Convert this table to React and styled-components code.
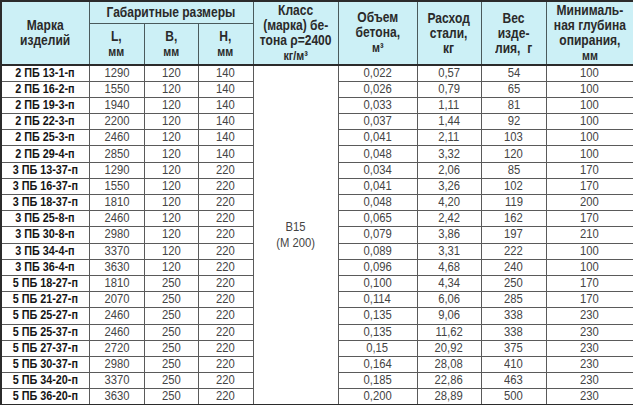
import React from "react";
import styled, { createGlobalStyle } from "styled-components";

const Global = createGlobalStyle`
  html, body { margin: 0; padding: 0; background: #fff; }
  body { font-family: "Liberation Sans", Arial, sans-serif; }
`;

const Table = styled.table`
  width: 633px;
  height: 403px;
  table-layout: fixed;
  border-collapse: collapse;
  border: 2px solid #2b2b2b;
  font-family: "Liberation Sans", Arial, sans-serif;
`;

const HeadCell = styled.th`
  background: #ccf0f6;
  color: #2a2a2a;
  font-weight: bold;
  font-size: 14px;
  line-height: 15px;
  text-align: center;
  vertical-align: middle;
  padding: 0;
  overflow: hidden;
  border: 1px solid #4a5a5c;
  border-bottom: ${(p) => (p.$last ? "2px solid #2b2b2b" : "1px solid #4a5a5c")};
  height: ${(p) => p.$h || "auto"};
`;

const Squeeze = styled.span`
  display: inline-block;
  white-space: nowrap;
  transform: scaleX(${(p) => p.$sx || 0.86});
  transform-origin: center;
`;

const Unit = styled.span`
  font-size: 12.5px;
  line-height: 15px;
`;

const Row = styled.tr`
  height: 16.2px;
`;

const Cell = styled.td`
  padding: 0;
  text-align: center;
  vertical-align: middle;
  font-size: ${(p) => (p.$mark ? "12px" : "12.5px")};
  font-weight: ${(p) => (p.$mark ? "bold" : "normal")};
  color: ${(p) => (p.$mark ? "#151515" : "#444")};
  line-height: 13px;
  border: 1px solid #5a5a5a;
  white-space: nowrap;
  overflow: hidden;
`;

const MergedCell = styled.td`
  padding: 0;
  text-align: center;
  vertical-align: middle;
  font-size: 12.5px;
  line-height: 16px;
  color: #444;
  border: 1px solid #5a5a5a;
`;

const widths = [88, 55, 54, 55, 85, 79, 64, 65, 88];

const rows = [
  ["2 ПБ 13-1-п", 1290, 120, 140, "0,022", "0,57", 54, 100],
  ["2 ПБ 16-2-п", 1550, 120, 140, "0,026", "0,79", 65, 100],
  ["2 ПБ 19-3-п", 1940, 120, 140, "0,033", "1,11", 81, 100],
  ["2 ПБ 22-3-п", 2200, 120, 140, "0,037", "1,44", 92, 100],
  ["2 ПБ 25-3-п", 2460, 120, 140, "0,041", "2,11", 103, 100],
  ["2 ПБ 29-4-п", 2850, 120, 140, "0,048", "3,32", 120, 100],
  ["3 ПБ 13-37-п", 1290, 120, 220, "0,034", "2,06", 85, 170],
  ["3 ПБ 16-37-п", 1550, 120, 220, "0,041", "3,26", 102, 170],
  ["3 ПБ 18-37-п", 1810, 120, 220, "0,048", "4,20", 119, 200],
  ["3 ПБ 25-8-п", 2460, 120, 220, "0,065", "2,42", 162, 170],
  ["3 ПБ 30-8-п", 2980, 120, 220, "0,079", "3,86", 197, 210],
  ["3 ПБ 34-4-п", 3370, 120, 220, "0,089", "3,31", 222, 100],
  ["3 ПБ 36-4-п", 3630, 120, 220, "0,096", "4,68", 240, 100],
  ["5 ПБ 18-27-п", 1810, 250, 220, "0,100", "4,34", 250, 170],
  ["5 ПБ 21-27-п", 2070, 250, 220, "0,114", "6,06", 285, 170],
  ["5 ПБ 25-27-п", 2460, 250, 220, "0,135", "9,06", 338, 230],
  ["5 ПБ 25-37-п", 2460, 250, 220, "0,135", "11,62", 338, 230],
  ["5 ПБ 27-37-п", 2720, 250, 220, "0,15", "20,92", 375, 230],
  ["5 ПБ 30-37-п", 2980, 250, 220, "0,164", "28,08", 410, 230],
  ["5 ПБ 34-20-п", 3370, 250, 220, "0,185", "22,86", 463, 230],
  ["5 ПБ 36-20-п", 3630, 250, 220, "0,200", "28,89", 500, 230],
];

const H = ({ children, ...rest }) => (
  <HeadCell {...rest}>
    <Squeeze>{children}</Squeeze>
  </HeadCell>
);

const D = ({ children, $mark }) => (
  <Cell $mark={$mark}>
    <Squeeze $sx={0.9}>{children}</Squeeze>
  </Cell>
);

export default function App() {
  return (
    <>
      <Global />
      <Table>
        <colgroup>
          {widths.map((w, i) => (
            <col key={i} style={{ width: w }} />
          ))}
        </colgroup>
        <thead>
          <tr>
            <H rowSpan={2} $last>
              Марка
              <br />
              изделий
            </H>
            <H colSpan={3} $h="21px">
              Габаритные размеры
            </H>
            <H rowSpan={2} $last>
              Класс
              <br />
              (марка) бе-
              <br />
              тона ρ=2400
              <br />
              <Unit>кг/м³</Unit>
            </H>
            <H rowSpan={2} $last>
              Объем
              <br />
              бетона,
              <br />
              <Unit>м³</Unit>
            </H>
            <H rowSpan={2} $last>
              Расход
              <br />
              стали,
              <br />
              кг
            </H>
            <H rowSpan={2} $last>
              Вес
              <br />
              изде-
              <br />
              лия,&nbsp; г
            </H>
            <H rowSpan={2} $last>
              Минималь-
              <br />
              ная глубина
              <br />
              опирания,
              <br />
              <Unit>мм</Unit>
            </H>
          </tr>
          <tr>
            <H $last $h="40px">
              L,
              <br />
              <Unit>мм</Unit>
            </H>
            <H $last>
              B,
              <br />
              <Unit>мм</Unit>
            </H>
            <H $last>
              H,
              <br />
              <Unit>мм</Unit>
            </H>
          </tr>
        </thead>
        <tbody>
          {rows.map((r, i) => (
            <Row key={i}>
              <D $mark>{r[0]}</D>
              <D>{r[1]}</D>
              <D>{r[2]}</D>
              <D>{r[3]}</D>
              {i === 0 && (
                <MergedCell rowSpan={rows.length}>
                  <Squeeze $sx={0.9}>
                    B15
                    <br />
                    (M 200)
                  </Squeeze>
                </MergedCell>
              )}
              <D>{r[4]}</D>
              <D>{r[5]}</D>
              <D>{r[6]}</D>
              <D>{r[7]}</D>
            </Row>
          ))}
        </tbody>
      </Table>
    </>
  );
}
